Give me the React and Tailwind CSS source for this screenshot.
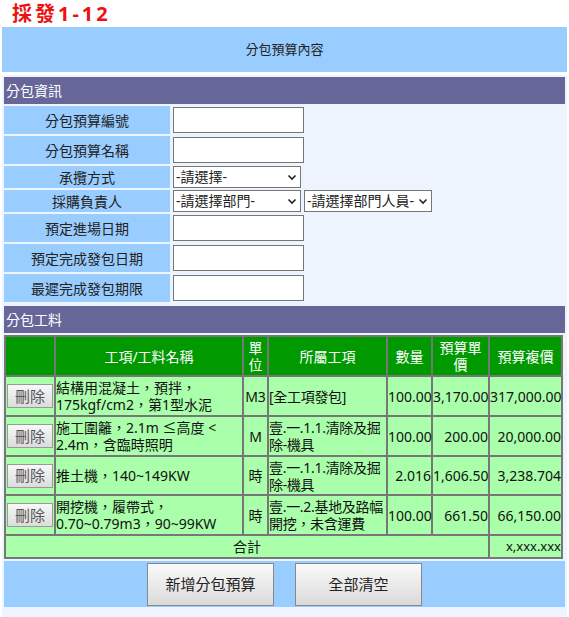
import React from 'react';

const font = { fontFamily: '"Noto Sans", "Noto Sans CJK TC", sans-serif' };

const formRows = [
    { label: '分包預算編號', type: 'input', h: 'h-[28px]' },
    { label: '分包預算名稱', type: 'input', h: 'h-[28px]' },
    { label: '承攬方式', type: 'select', h: 'h-[22px]' },
    { label: '採購負責人', type: 'select2', h: 'h-[22px]' },
    { label: '預定進場日期', type: 'input', h: 'h-[28px]' },
    { label: '預定完成發包日期', type: 'input', h: 'h-[28px]' },
    { label: '最遲完成發包期限', type: 'input', h: 'h-[28px]' },
];

const items = [
    { name: '結構用混凝土，預拌，175kgf/cm2，第1型水泥', unit: 'M3', work: '[全工項發包]', qty: '100.00', price: '3,170.00', total: '317,000.00', h: 'h-[38px]' },
    { name: '施工圍籬，2.1m ≤高度 < 2.4m，含臨時照明', unit: 'M', work: '壹.一.1.1.清除及掘除-機具', qty: '100.00', price: '200.00', total: '20,000.00', h: 'h-[38px]' },
    { name: '推土機，140~149KW', unit: '時', work: '壹.一.1.1.清除及掘除-機具', qty: '2.016', price: '1,606.50', total: '3,238.704', h: 'h-[37px]' },
    { name: '開挖機，履帶式，0.70~0.79m3，90~99KW', unit: '時', work: '壹.一.2.基地及路幅開挖，未含運費', qty: '100.00', price: '661.50', total: '66,150.00', h: 'h-[38px]' },
];

function Chevron() {
    return (
        <svg className="w-[10px] h-[10px]" viewBox="0 0 10 10" fill="none" stroke="#222" strokeWidth="1.6">
            <path d="M1.5 3.5 L5 7 L8.5 3.5" />
        </svg>
    );
}

function FakeSelect({ text, w }) {
    return (
        <div className={`${w} h-[22px] bg-white border border-[#767676] flex items-center justify-between pl-[2px] pr-[3px] text-[14px] text-[#222]`}>
            <span className="leading-none">{text}</span>
            <Chevron />
        </div>
    );
}

function SectionBar({ children, className = '' }) {
    return (
        <div className={`h-[27px] bg-[#666699] text-white text-[14px] flex items-center pl-[2px] ${className}`}>
            {children}
        </div>
    );
}

export default function App() {
    return (
        <div className="w-[569px] min-h-[617px] bg-white" style={font}>
            <div className="h-[27px] pl-[12px] pt-[3px] text-[20px] leading-[22px] font-bold text-[#ee1111] tracking-[3px]">
                採發1-12
            </div>
            <div className="mx-[2px] h-[45px] bg-[#99ccff] flex items-center justify-center text-[13px] text-[#222]">
                分包預算內容
            </div>
            <div className="mx-[2px] mt-[3px] w-[565px] min-h-[542px] bg-[#eef4fe] p-[2px] flex flex-col gap-[2px]">
                <SectionBar>分包資訊</SectionBar>

                <div className="flex flex-col gap-[2px]">
                    {formRows.map(row => (
                        <div key={row.label} className={`flex gap-[2px] ${row.h}`}>
                            <div className="w-[166px] bg-[#99ccff] flex items-center justify-center text-[14px] text-[#222]">
                                {row.label}
                            </div>
                            <div className="flex items-center gap-[3px] pl-[1px]">
                                {row.type === 'input' && (
                                    <input type="text" className="w-[131px] h-[26px] bg-white border border-[#767676] outline-none" />
                                )}
                                {row.type === 'select' && <FakeSelect text="-請選擇-" w="w-[128px]" />}
                                {row.type === 'select2' && (
                                    <>
                                        <FakeSelect text="-請選擇部門-" w="w-[128px]" />
                                        <FakeSelect text="-請選擇部門人員-" w="w-[128px]" />
                                    </>
                                )}
                            </div>
                        </div>
                    ))}
                </div>

                <SectionBar className="mt-[2px]">分包工料</SectionBar>

                <table className="w-[559px] table-fixed border-separate border-spacing-[2px] bg-[#777] text-[14px] leading-[17px]">
                    <colgroup>
                        <col className="w-[48px]" />
                        <col className="w-[186px]" />
                        <col className="w-[23px]" />
                        <col className="w-[117px]" />
                        <col className="w-[43px]" />
                        <col className="w-[55px]" />
                        <col className="w-[71px]" />
                    </colgroup>
                    <thead>
                        <tr className="h-[38px] bg-[#009900] text-white">
                            <th className="p-0 font-normal"></th>
                            <th className="p-0 font-normal">工項/工料名稱</th>
                            <th className="p-0 font-normal">單位</th>
                            <th className="p-0 font-normal">所屬工項</th>
                            <th className="p-0 font-normal">數量</th>
                            <th className="p-0 font-normal">預算單價</th>
                            <th className="p-0 font-normal">預算複價</th>
                        </tr>
                    </thead>
                    <tbody className="text-[#111]">
                        {items.map((it, i) => (
                            <tr key={i} className={`${it.h} bg-[#aaffaa]`}>
                                <td className="p-0 pl-[1px]">
                                    <button className="w-[46px] h-[24px] border border-[#999] bg-gradient-to-b from-[#f8f8f8] to-[#dcdcdc] text-[15px] leading-none text-[#555]">
                                        刪除
                                    </button>
                                </td>
                                <td className="p-0 align-middle">{it.name}</td>
                                <td className="p-0 text-center">{it.unit}</td>
                                <td className="p-0 tracking-[-0.3px]">{it.work}</td>
                                <td className="p-0 text-right">{it.qty}</td>
                                <td className="p-0 text-right">{it.price}</td>
                                <td className="p-0 text-right">{it.total}</td>
                            </tr>
                        ))}
                        <tr className="h-[21px] bg-[#aaffaa]">
                            <td colSpan={6} className="p-0 text-center">合計</td>
                            <td className="p-0 text-right text-[13px]">x,xxx.xxx</td>
                        </tr>
                    </tbody>
                </table>

                <div className="h-[46px] bg-[#99ccff] flex items-center justify-center gap-[21px]">
                    <button className="w-[127px] h-[43px] border border-[#888] bg-gradient-to-b from-[#fafafa] to-[#dadada] text-[15px] text-[#222]">
                        新增分包預算
                    </button>
                    <button className="w-[127px] h-[43px] border border-[#888] bg-gradient-to-b from-[#fafafa] to-[#dadada] text-[15px] text-[#222]">
                        全部清空
                    </button>
                </div>
            </div>
        </div>
    );
}
